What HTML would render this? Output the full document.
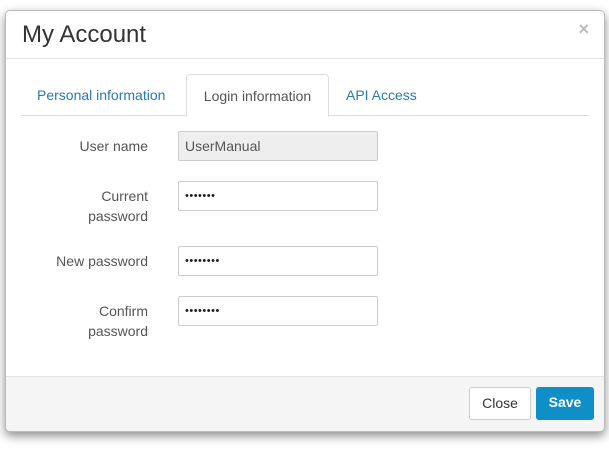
<!DOCTYPE html>
<html><head><style>
body{margin:0;width:609px;height:457px;background:#fff;font-family:"Liberation Sans",Arial,sans-serif;position:relative;overflow:hidden}
.m{position:absolute;left:5px;top:10px;width:598px;height:420px;border:1px solid #bbb;border-radius:5px;box-shadow:0 4px 10px rgba(0,0,0,.45);background:#fff;overflow:hidden}
.h{position:absolute;left:0;top:0;right:0;height:47px;border-bottom:1px solid #e5e5e5}
.h h1{margin:0;position:absolute;left:16px;top:10px;font-size:24px;font-weight:normal;color:#333}
.x{position:absolute;right:15px;top:8px;color:#bbb;font-size:18px;font-weight:bold}
.tabs{position:absolute;left:15px;right:15px;top:63px;height:41px;border-bottom:1px solid #ddd}
.t{position:absolute;top:0;height:41px;line-height:43px;font-size:14px;color:#2a7ab0}
.t.a{border:1px solid #ddd;border-bottom:1px solid #fff;border-radius:4px 4px 0 0;color:#555;background:#fff;height:41px;text-align:center}
.l{position:absolute;right:456px;font-size:14px;color:#555;text-align:right;line-height:20px}
.i{position:absolute;left:172px;border:1px solid #ccc;border-radius:2px;font-size:14px;line-height:28px;padding-left:6px;box-sizing:border-box;width:200px;height:30px;color:#222}
.p{font-size:11px;letter-spacing:0.5px}
.f{position:absolute;left:0;right:0;bottom:0;height:54px;background:#f5f5f5;border-top:1px solid #e5e5e5}
.b{position:absolute;top:10px;height:33px;line-height:31px;font-size:14px;border-radius:3px;text-align:center;box-sizing:border-box}
</style></head><body>
<div class="m">
<div class="h"><h1>My Account</h1><span class="x">×</span></div>
<div class="tabs">
<span class="t" style="left:16px">Personal information</span>
<span class="t a" style="left:165px;width:141px">Login information</span>
<span class="t" style="left:325px">API Access</span>
</div>
<div class="l" style="top:125px">User name</div>
<div class="i" style="top:120px;background:#eee;color:#555">UserManual</div>
<div class="l" style="top:175px">Current<br>password</div>
<div class="i p" style="top:170px">•••••••</div>
<div class="l" style="top:240px">New password</div>
<div class="i p" style="top:235px">••••••••</div>
<div class="l" style="top:290px">Confirm<br>password</div>
<div class="i p" style="top:285px">••••••••</div>
<div class="f">
<div class="b" style="left:463px;width:62px;background:#fff;border:1px solid #ccc;color:#333">Close</div>
<div class="b" style="left:530px;width:58px;background:#0f8fc8;color:#fff;font-weight:bold">Save</div>
</div>
</div>
</body></html>
